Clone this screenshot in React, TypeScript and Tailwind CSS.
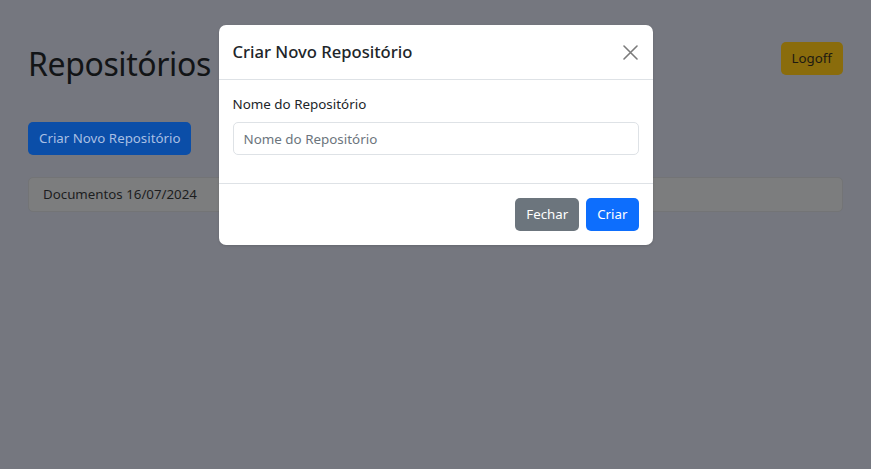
import React from "react";

const font = { fontFamily: '"Noto Sans", "Open Sans", sans-serif' };

function CloseIcon() {
  return (
    <svg width="15" height="15" viewBox="0 0 15 15" fill="none" stroke="#7b7b7b" strokeWidth="1.6" strokeLinecap="round">
      <path d="M1 1L14 14M14 1L1 14" />
    </svg>
  );
}

export default function App() {
  return (
    <div style={font} className="relative min-h-[469px] w-full bg-[#75777f] text-[13.3px]">
      {/* page behind the backdrop */}
      <div className="px-[28px] pt-[42px]">
        <div className="flex items-start justify-between">
          <h1 className="mt-px text-[32px] leading-[42px] font-normal tracking-[-0.4px] text-[#121416]">Repositórios</h1>
          <button
            type="button"
            className="h-[33px] rounded-[5px] bg-[#8a6c0c] px-[11px] text-[13.3px] text-[#1d1a12]"
          >
            Logoff
          </button>
        </div>
        <button
          type="button"
          className="mt-[37px] h-[33px] rounded-[5px] bg-[#0b4ea8] px-[11px] text-[13.3px] text-[#a8bfe3]"
        >
          Criar Novo Repositório
        </button>
        <div className="mt-[22px] flex h-[35px] items-center rounded-[5px] border border-[#737476] bg-[#7c7d7e] px-[14px] text-[#1c1d1f]">
          Documentos 16/07/2024
        </div>
      </div>

      {/* modal */}
      <div className="absolute inset-0 flex justify-center">
        <div className="mt-[25px] h-fit w-[434px] rounded-[7px] bg-white shadow-sm">
          <div className="flex h-[55px] items-center justify-between border-b border-[#dee2e6] px-[14px]">
            <p className="text-[16.6px] font-medium text-[#212529]">Criar Novo Repositório</p>
            <button type="button" className="mr-px flex size-[15px] items-center justify-center" aria-label="Fechar">
              <CloseIcon />
            </button>
          </div>
          <div className="p-[14px]">
            <label className="block text-[13.4px] leading-[21px] text-[#212529]">Nome do Repositório</label>
            <input
              type="text"
              placeholder="Nome do Repositório"
              className="mt-[7px] mb-[14px] h-[33px] w-full rounded-[5px] border border-[#dee2e6] px-[10px] text-[13.4px] text-[#212529] outline-none placeholder:text-[#6c757d]"
            />
          </div>
          <div className="flex h-[62px] items-center justify-end gap-[7px] border-t border-[#dee2e6] px-[14px]">
            <button type="button" className="h-[33px] rounded-[5px] bg-[#6c757d] px-[11px] text-[13.3px] text-white">
              Fechar
            </button>
            <button type="button" className="h-[33px] rounded-[5px] bg-[#0d6efd] px-[11px] text-[13.3px] text-white">
              Criar
            </button>
          </div>
        </div>
      </div>
    </div>
  );
}
